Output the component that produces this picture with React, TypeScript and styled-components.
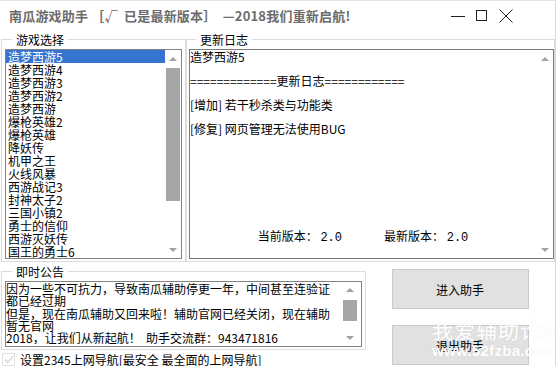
import styled, { createGlobalStyle } from 'styled-components';

const GlobalStyle = createGlobalStyle`
  html, body {
    margin: 0;
    padding: 0;
    background: #ffffff;
  }
  body {
    font-family: "Noto Sans CJK SC", "Liberation Sans", sans-serif;
    font-size: 12px;
    color: #000;
  }
  * { box-sizing: border-box; }
`;

const Window = styled.div`
  position: relative;
  width: 556px;
  height: 366px;
  overflow: hidden;
  background: #fff;
  border-right: 1px solid #d9d9d9;
  border-top: 1px solid #e4e4e4;
  display: flex;
  flex-direction: column;
`;

const TitleBar = styled.div`
  height: 29px;
  flex: none;
  display: flex;
  align-items: center;
  padding-left: 9px;
`;

const Title = styled.div`
  flex: 1;
  font-size: 13px;
  font-weight: 700;
  color: #6b6b6b;
  white-space: pre;
  letter-spacing: 0.2px;
`;

const Controls = styled.div`
  display: flex;
  margin-right: 37px;
`;

const ControlBtn = styled.div`
  width: 24px;
  height: 24px;
  display: flex;
  align-items: center;
  justify-content: center;
`;

const TopRow = styled.div`
  margin-top: 3px;
  padding-left: 1px;
  display: grid;
  grid-template-columns: 185px 369px;
  height: 228px;
`;

const Group = styled.fieldset<{ $pl: number; $pr: number }>`
  margin: 0;
  min-width: 0;
  border: 1px solid #dcdcdc;
  padding: 3px ${p => p.$pr}px 2px ${p => p.$pl}px;
  display: flex;
  flex-direction: column;
`;

const Legend = styled.legend`
  margin-left: 7px;
  padding: 0 4px;
  font-size: 12px;
  line-height: 13px;
  color: #000;
`;

const ListBox = styled.div`
  flex: 1;
  border: 1px solid #828282;
  display: flex;
  min-height: 0;
`;

const Items = styled.div`
  flex: 1;
  overflow: hidden;
`;

const Item = styled.div<{ $selected?: boolean }>`
  height: 13px;
  line-height: 13px;
  padding-left: 2px;
  white-space: nowrap;
  background: ${p => (p.$selected ? '#3574d0' : 'transparent')};
  color: ${p => (p.$selected ? '#fff' : '#000')};
`;

const ScrollBar = styled.div<{ $w: number; $mr?: number }>`
  width: ${p => p.$w}px;
  margin-right: ${p => p.$mr ?? 0}px;
  flex: none;
  display: flex;
  flex-direction: column;
`;

const Arrow = styled.div<{ $h: number }>`
  height: ${p => p.$h}px;
  flex: none;
  display: flex;
  align-items: center;
  justify-content: center;
`;

const Tri = styled.span<{ $down?: boolean }>`
  width: 0;
  height: 0;
  border-left: 4px solid transparent;
  border-right: 4px solid transparent;
  ${p =>
    p.$down
      ? 'border-top: 4px solid #a3a3a3;'
      : 'border-bottom: 4px solid #a3a3a3;'}
`;

const Track = styled.div`
  flex: 1;
  padding: 0 1px;
`;

const Thumb = styled.div<{ $top: number; $h: number }>`
  margin-top: ${p => p.$top}px;
  height: ${p => p.$h}px;
  background: #a6a6a6;
`;

const LogBox = styled.div`
  flex: 1;
  border: 1px solid #7a7a7a;
  display: flex;
  min-height: 0;
`;

const LogText = styled.div`
  flex: 1;
  display: flex;
  flex-direction: column;
  padding-top: 1px;
  line-height: 12px;
  white-space: pre;
`;

const LogLine = styled.div`
  height: 24px;
`;

const Versions = styled.div`
  margin-top: auto;
  margin-bottom: 13px;
  display: flex;
  justify-content: center;
  gap: 42px;
  line-height: 13px;
`;

const Version = styled.span`
  white-space: pre;
  .num {
    font-family: "Liberation Mono", monospace;
    font-size: 12px;
  }
`;

const BottomRow = styled.div`
  flex: 1;
  display: grid;
  grid-template-columns: 366px 188px;
  min-height: 0;
`;

const LeftCol = styled.div`
  padding-left: 1px;
  padding-top: 4px;
  display: flex;
  flex-direction: column;
`;

const NoticeBox = styled.div`
  height: 66px;
  border: 1px solid #828282;
  display: flex;
`;

const NoticeText = styled.div`
  flex: 1;
  padding: 1px 4px 0 0;
  line-height: 12.25px;
  overflow: hidden;
  word-break: break-all;
`;

const NoticePara = styled.div`
  white-space: pre-wrap;
`;

const CheckRow = styled.label`
  display: flex;
  align-items: center;
  gap: 5px;
  margin-top: 3px;
  padding-left: 1px;
  line-height: 13px;
  white-space: nowrap;
`;

const CheckBox = styled.span`
  width: 13px;
  height: 13px;
  border: 1px solid #e2e2e2;
  display: flex;
  align-items: center;
  justify-content: center;
`;

const RightCol = styled.div`
  padding-top: 8px;
  display: flex;
  flex-direction: column;
  align-items: center;
  gap: 16px;
`;

const Button = styled.div`
  width: 137px;
  height: 40px;
  flex: none;
  background: #e1e1e1;
  border: 1px solid #cacaca;
  display: flex;
  align-items: center;
  justify-content: center;
  font-size: 12px;
`;

const Watermark = styled.div`
  position: absolute;
  left: 432px;
  top: 316px;
  color: #fff;
  white-space: nowrap;
  pointer-events: none;
  text-shadow: 0 0 1px rgba(0, 0, 0, 0.08);
  .cn {
    font-size: 21px;
    line-height: 25px;
    letter-spacing: 1px;
  }
  .en {
    font-family: "Liberation Sans", Arial, sans-serif;
    font-weight: 700;
    font-size: 15px;
    line-height: 18px;
    letter-spacing: 0.3px;
  }
`;

const games = [
  '造梦西游5',
  '造梦西游4',
  '造梦西游3',
  '造梦西游2',
  '造梦西游',
  '爆枪英雄2',
  '爆枪英雄',
  '降妖传',
  '机甲之王',
  '火线风暴',
  '西游战记3',
  '封神太子2',
  '三国小镇2',
  '勇士的信仰',
  '西游灭妖传',
  '国王的勇士6',
];

const logLines = [
  '造梦西游5',
  '=============更新日志============',
  '[增加] 若干秒杀类与功能类',
  '[修复] 网页管理无法使用BUG',
];

const notice =
  '因为一些不可抗力，导致南瓜辅助停更一年，中间甚至连验证都已经过期\n但是，现在南瓜辅助又回来啦！辅助官网已经关闭，现在辅助暂无官网\n2018，让我们从新起航！  助手交流群：943471816';

const App = () => {
  return (
    <Window>
      <GlobalStyle />
      <TitleBar>
        <Title>南瓜游戏助手 ［√  已是最新版本］  —2018我们重新启航!</Title>
        <Controls>
          <ControlBtn>
            <svg width="14" height="14" viewBox="0 0 14 14">
              <line x1="0" y1="7.5" x2="14" y2="7.5" stroke="#222" strokeWidth="1" />
            </svg>
          </ControlBtn>
          <ControlBtn>
            <svg width="12" height="12" viewBox="0 0 12 12">
              <rect x="0.5" y="0.5" width="10" height="10" fill="none" stroke="#222" strokeWidth="1" />
            </svg>
          </ControlBtn>
          <ControlBtn>
            <svg width="14" height="14" viewBox="0 0 14 14">
              <path d="M0.5 0.5 L13.5 13.5 M13.5 0.5 L0.5 13.5" stroke="#222" strokeWidth="1" />
            </svg>
          </ControlBtn>
        </Controls>
      </TitleBar>

      <TopRow>
        <Group $pl={3} $pr={3}>
          <Legend>游戏选择</Legend>
          <ListBox>
            <Items>
              {games.map((g, i) => (
                <Item key={g} $selected={i === 0}>
                  {g}
                </Item>
              ))}
            </Items>
            <ScrollBar $w={16}>
              <Arrow $h={17}>
                <Tri />
              </Arrow>
              <Track>
                <Thumb $top={1} $h={133} />
              </Track>
              <Arrow $h={17}>
                <Tri $down />
              </Arrow>
            </ScrollBar>
          </ListBox>
        </Group>

        <Group $pl={2} $pr={0}>
          <Legend>更新日志</Legend>
          <LogBox>
            <LogText>
              {logLines.map(l => (
                <LogLine key={l}>{l}</LogLine>
              ))}
              <Versions>
                <Version>
                  当前版本： <span className="num">2.0</span>
                </Version>
                <Version>
                  最新版本： <span className="num">2.0</span>
                </Version>
              </Versions>
            </LogText>
            <ScrollBar $w={17}>
              <Arrow $h={17}>
                <Tri />
              </Arrow>
              <Track />
              <Arrow $h={17}>
                <Tri $down />
              </Arrow>
            </ScrollBar>
          </LogBox>
        </Group>
      </TopRow>

      <BottomRow>
        <LeftCol>
          <Group $pl={3} $pr={3}>
            <Legend>即时公告</Legend>
            <NoticeBox>
              <NoticeText>
                {notice.split('\n').map(p => (
                  <NoticePara key={p}>{p}</NoticePara>
                ))}
              </NoticeText>
              <ScrollBar $w={16} $mr={3}>
                <Arrow $h={15}>
                  <Tri />
                </Arrow>
                <Track>
                  <Thumb $top={3} $h={21} />
                </Track>
                <Arrow $h={16}>
                  <Tri $down />
                </Arrow>
              </ScrollBar>
            </NoticeBox>
          </Group>
          <CheckRow>
            <CheckBox>
              <svg width="10" height="9" viewBox="0 0 10 9">
                <path d="M1 4.5 L3.8 7.5 L9 1" fill="none" stroke="#cfcfcf" strokeWidth="1.2" />
              </svg>
            </CheckBox>
            设置2345上网导航[最安全 最全面的上网导航]
          </CheckRow>
        </LeftCol>
        <RightCol>
          <Button>进入助手</Button>
          <Button>退出助手</Button>
        </RightCol>
      </BottomRow>

      <Watermark>
        <div className="cn">我爱辅助论坛</div>
        <div className="en">www.52fzba.com</div>
      </Watermark>
    </Window>
  );
};

export default App;
